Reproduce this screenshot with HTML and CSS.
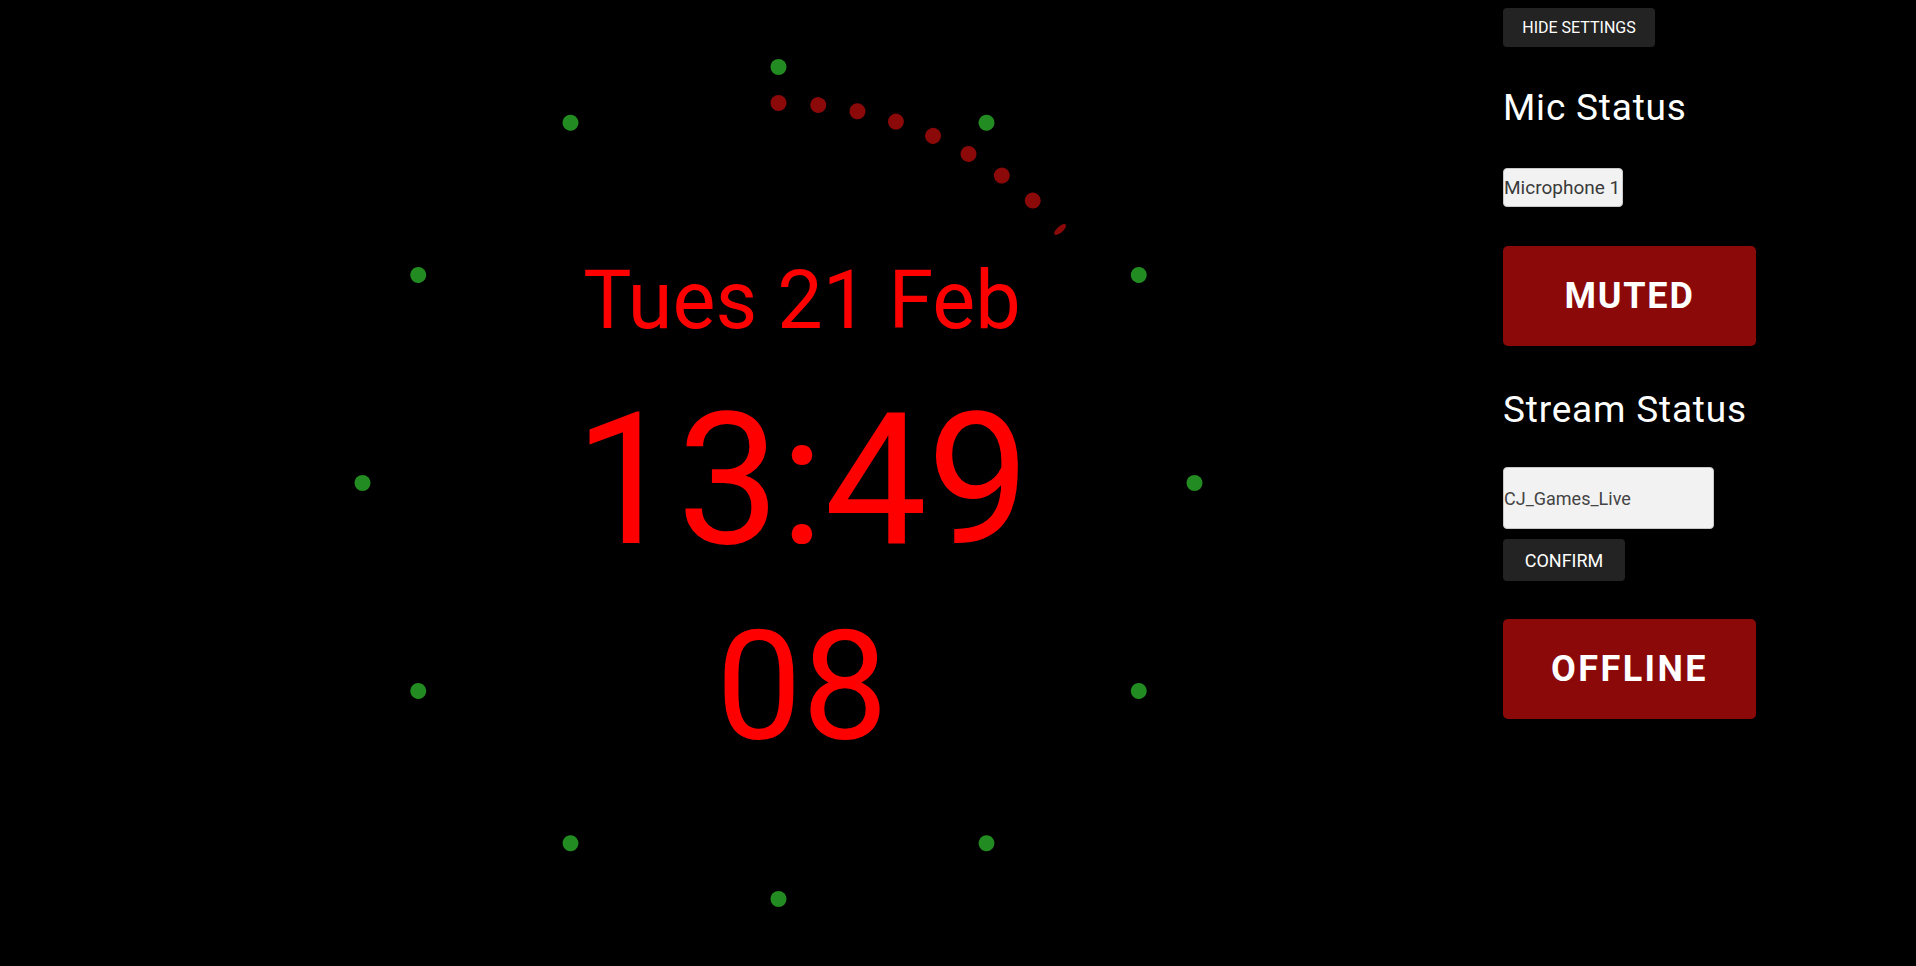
FILE: index.html
```html
<!DOCTYPE html>
<html lang="en">
<head>
<meta charset="utf-8">
<title>Stream Clock</title>
<link rel="stylesheet" href="styles.css">
</head>
<body>
<div class="app">
  <main class="clock-area">
    <svg class="dial" width="1503" height="966" viewBox="0 0 1503 966" aria-hidden="true">
      <g class="hours">
        <circle cx="778.5" cy="67" r="8"/>
        <circle cx="778.5" cy="67" r="8" transform="rotate(30 778.5 483)"/>
        <circle cx="778.5" cy="67" r="8" transform="rotate(60 778.5 483)"/>
        <circle cx="778.5" cy="67" r="8" transform="rotate(90 778.5 483)"/>
        <circle cx="778.5" cy="67" r="8" transform="rotate(120 778.5 483)"/>
        <circle cx="778.5" cy="67" r="8" transform="rotate(150 778.5 483)"/>
        <circle cx="778.5" cy="67" r="8" transform="rotate(180 778.5 483)"/>
        <circle cx="778.5" cy="67" r="8" transform="rotate(210 778.5 483)"/>
        <circle cx="778.5" cy="67" r="8" transform="rotate(240 778.5 483)"/>
        <circle cx="778.5" cy="67" r="8" transform="rotate(270 778.5 483)"/>
        <circle cx="778.5" cy="67" r="8" transform="rotate(300 778.5 483)"/>
        <circle cx="778.5" cy="67" r="8" transform="rotate(330 778.5 483)"/>
      </g>
      <g class="seconds">
        <circle cx="778.5" cy="103" r="8"/>
        <circle cx="778.5" cy="103" r="8" transform="rotate(6 778.5 483)"/>
        <circle cx="778.5" cy="103" r="8" transform="rotate(12 778.5 483)"/>
        <circle cx="778.5" cy="103" r="8" transform="rotate(18 778.5 483)"/>
        <circle cx="778.5" cy="103" r="8" transform="rotate(24 778.5 483)"/>
        <circle cx="778.5" cy="103" r="8" transform="rotate(30 778.5 483)"/>
        <circle cx="778.5" cy="103" r="8" transform="rotate(36 778.5 483)"/>
        <circle cx="778.5" cy="103" r="8" transform="rotate(42 778.5 483)"/>
        <ellipse cx="778.5" cy="104" rx="3" ry="7.5" transform="rotate(48 778.5 483)"/>
      </g>
    </svg>
    <div class="clock-text">
      <div class="date">Tues 21 Feb</div>
      <div class="time">13:49</div>
      <div class="secs">08</div>
    </div>
  </main>
  <aside class="settings">
    <button class="btn btn-hide">HIDE SETTINGS</button>
    <h2 class="heading heading-mic">Mic Status</h2>
    <select class="mic-select">
      <option>Microphone 1</option>
    </select>
    <div class="status status-muted">MUTED</div>
    <h2 class="heading heading-stream">Stream Status</h2>
    <input class="stream-input" type="text" value="CJ_Games_Live">
    <button class="btn btn-confirm">CONFIRM</button>
    <div class="status status-offline">OFFLINE</div>
  </aside>
</div>
</body>
</html>
```
FILE: styles.css
```css
html, body {
  margin: 0;
  padding: 0;
  background: #000;
  font-family: Roboto, "Liberation Sans", sans-serif;
}

.app {
  display: flex;
  width: 1916px;
  height: 966px;
  overflow: hidden;
}

.clock-area {
  position: relative;
  width: 1503px;
  height: 966px;
  flex: none;
}

.dial {
  position: absolute;
  left: 0;
  top: 0;
}

.hours circle {
  fill: #228b22;
}

.seconds circle,
.seconds ellipse {
  fill: #8b0909;
}

.clock-text {
  position: relative;
  display: flex;
  flex-direction: column;
  align-items: center;
  box-sizing: border-box;
  width: 1503px;
  padding-left: 101px;
  padding-top: 260px;
  color: #ff0000;
  line-height: 1;
}

.date {
  font-size: 81px;
}

.time {
  font-size: 183px;
  margin-top: 48px;
}

.secs {
  font-size: 153px;
  margin-top: 38px;
}

.settings {
  display: flex;
  flex-direction: column;
  align-items: flex-start;
  width: 260px;
  padding-top: 8px;
}

.btn {
  border: none;
  border-radius: 4px;
  background: #232323;
  color: #fff;
  font-family: Roboto, "Liberation Sans", sans-serif;
  padding: 0;
  cursor: pointer;
}

.btn-hide {
  width: 152px;
  height: 39px;
  font-size: 16px;
}

.heading {
  margin: 0;
  color: #fff;
  font-weight: 400;
  font-size: 37px;
  letter-spacing: 0.8px;
  line-height: 1;
}

.heading-mic {
  margin-top: 42px;
}

.heading-stream {
  margin-top: 45px;
}

.mic-select {
  margin-top: 42px;
  width: 120px;
  height: 39px;
  box-sizing: border-box;
  -webkit-appearance: none;
  appearance: none;
  background: #f2f2f2;
  border: 1px solid #c8c8c8;
  border-radius: 4px;
  padding: 0;
  color: #3a3a3a;
  font-family: Roboto, "Liberation Sans", sans-serif;
  font-size: 19px;
}

.status {
  margin-top: 39px;
  width: 253px;
  height: 100px;
  border-radius: 5px;
  background: #8b0909;
  color: #fff;
  font-weight: 700;
  font-size: 36px;
  letter-spacing: 1.8px;
  display: flex;
  align-items: center;
  justify-content: center;
}

.status-offline {
  margin-top: 38px;
  letter-spacing: 2.4px;
}

.stream-input {
  margin-top: 39px;
  width: 211px;
  height: 62px;
  box-sizing: border-box;
  background: #f2f2f2;
  border: 1px solid #c8c8c8;
  border-radius: 4px;
  padding: 0;
  color: #444;
  font-family: Roboto, "Liberation Sans", sans-serif;
  font-size: 18px;
}

.btn-confirm {
  margin-top: 10px;
  width: 122px;
  height: 42px;
  font-size: 18px;
}
```
